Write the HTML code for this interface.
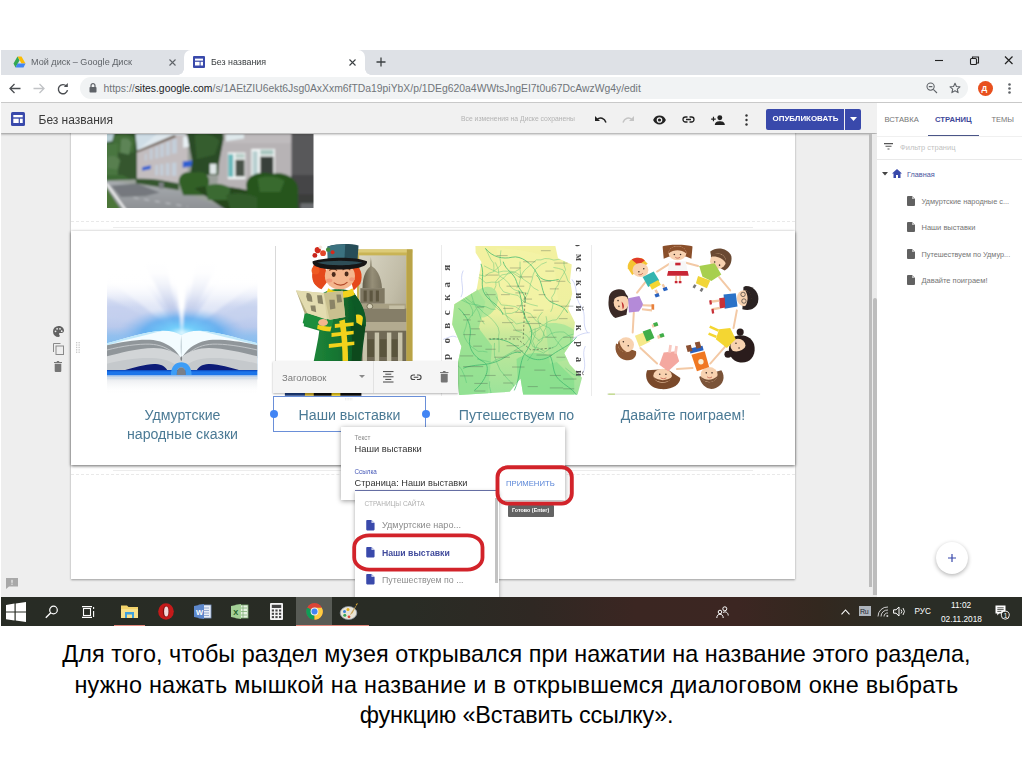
<!DOCTYPE html>
<html lang="ru">
<head>
<meta charset="utf-8">
<title>Без названия</title>
<style>
*{box-sizing:border-box;margin:0;padding:0}
html,body{width:1024px;height:767px;overflow:hidden;background:#fff}
body{position:relative;font-family:"Liberation Sans","DejaVu Sans",sans-serif;color:#333}
.a{position:absolute;white-space:nowrap}
svg{position:absolute;overflow:visible}
#shot{position:absolute;left:1px;top:50px;width:1021px;height:576px;overflow:hidden;background:#eee}
/* everything inside #shot is positioned with page coords via this wrapper */
#w{position:absolute;left:-1px;top:-50px;width:1024px;height:767px;filter:blur(.4px)}
.t{line-height:1}
#caption div{position:absolute;left:0;width:1033px;text-align:center;font-size:23.4px;line-height:28px;color:#000;white-space:nowrap}
</style>
</head>
<body>
<div id="shot"><div id="w">

<div class="a" style="left:71px;top:130px;width:724px;height:449px;background:#fff;box-shadow:0 1px 2px rgba(0,0,0,.35)"></div>
<svg style="left:107px;top:133.500px" width="206.500" height="74" viewBox="32 18 916 328" preserveAspectRatio="none">
<defs><filter id="bl1" x="-5%" y="-5%" width="110%" height="110%"><feGaussianBlur stdDeviation="3.600"/></filter><clipPath id="cp1"><rect x="32" y="18" width="916" height="328"/></clipPath>
<linearGradient id="rd" x1="0" y1="0" x2="0" y2="1"><stop offset="0" stop-color="#a9adb1"/><stop offset="1" stop-color="#8d9094"/></linearGradient></defs>
<g clip-path="url(#cp1)"><g filter="url(#bl1)">
<rect x="20" y="10" width="940" height="345" fill="#9aa09a"/>

<path d="M20 10h360v100H20z" fill="#dfe8ee"/>

<path d="M20 10h150l-5 40 10 60-10 110H20z" fill="#34572e"/>
<path d="M60 30c30-20 80-10 95 10l-5 60H60z" fill="#426d39"/>
<path d="M20 60h60v140H20z" fill="#487640"/>
<path d="M158 14h100l-92 78z" fill="#cfdde6"/><path d="M20 10h45l-10 40-35 5z" fill="#b9cfd6"/><path d="M95 40c20-8 40 0 45 20l-10 50-40-10z" fill="#5d8456"/><path d="M35 120c20-10 45-5 55 15l-10 40-45-5z" fill="#587f50"/>

<path d="M165 92L330 22h60v215L165 215z" fill="#c3bdbf"/>
<path d="M165 92L330 22l10 8L168 100z" fill="#6c5e52"/>
<g fill="#c3ced9"><path d="M320 45l22-7v65l-22 3zM293 56l18-6v62l-18 3zM268 66l16-5v58l-16 3zM246 76l14-5v54l-14 2zM222 86l12-4v48l-12 2zM200 108l8-3v30l-8 1zM320 145l20-1v60l-20-1zM293 148l16-1v56l-16-1zM268 152l14-1v52l-14-1zM246 155l12-1v48l-12-1z"/></g>
<path d="M188 165l38-8v16l-38 8zM368 140l50-6v26l-50 8z" fill="#2f5fd0"/>
<path d="M370 30l25-5v50l-25 4z" fill="#e8f0f4"/>

<path d="M385 10h160l18 100-25 30-10 60H400l10-60z" fill="#294b25"/>
<path d="M420 20c40-10 90 0 110 30l-20 60-80 20z" fill="#345d2d"/>

<path d="M555 10h300v260H520l10-130z" fill="#b7b3b5"/>
<path d="M555 18h295v40H560z" fill="#bfbbbd"/>
<path d="M560 18h80v20l-80 12z" fill="#dfe9ec"/>

<path d="M568 100h78v118h-78z" fill="#f3f6f6"/><path d="M570 108h22v100h-22z" fill="#66b7b9"/><path d="M602 132h40v74h-40z" fill="#4a5248"/><path d="M602 105h40v20h-40z" fill="#b9cfc9"/>
<path d="M672 84h105v125h-105z" fill="#f3f6f6"/><path d="M678 94h22v105h-22z" fill="#b7cfd0"/><path d="M712 118h58v82h-58z" fill="#39413a"/><path d="M712 88h58v22h-58z" fill="#a9c6c0"/>
<path d="M488 150h30v45h-30z" fill="#dfe7e7"/>

<path d="M850 10h110v345H850z" fill="#58585a"/>
<path d="M850 200h110v155H850z" fill="#454547"/>

<path d="M20 222l330 48 230 85H20z" fill="url(#rd)"/>
<path d="M50 247l116-10 100 40-62 16-110 4z" fill="#6d7177" opacity=".85"/>
<path d="M150 300l240 40" stroke="#c9ccd0" stroke-width="4" stroke-dasharray="22 26"/>
<path d="M30 238l85 117" stroke="#f2f2f2" stroke-width="9"/>
<path d="M20 240l75 115H20z" fill="#4c7538"/>
<path d="M20 200h80l40 20-120 5z" fill="#3d6a34"/>

<path d="M160 218c60-5 120 5 190 20v28l-190-30z" fill="#35562f"/>
<rect x="262" y="232" width="22" height="28" fill="#7b7f82"/>

<path d="M350 230c0-40 40-50 70-40 30-10 65 0 65 40l-10 60H370z" fill="#336028"/>
<path d="M420 260c60-20 130-15 250 10v85H560z" fill="#25471f"/>
<path d="M470 250c40-20 90-10 110 10l-10 50h-90z" fill="#3b6a32"/>
<path d="M650 250c-5-50 60-70 110-55 60-15 120 20 120 70v90H660z" fill="#27541f"/>
<path d="M700 215c40-15 90-10 120 10l-20 50H710z" fill="#386a2f"/>
<path d="M560 290c40-20 100-10 140 10v55H580z" fill="#315c29"/>
<path d="M880 285h80v70h-80z" fill="#3a3d3b"/>
<path d="M890 325h70v30h-70z" fill="#6a6d70"/>
</g></g></svg>


<div class="a" style="left:71px;top:220.500px;width:724px;height:0;border-top:1px dashed #e9e9e9"></div>
<div class="a" style="left:113px;top:227px;width:640px;height:1px;background:#ececec"></div>
<div class="a" style="left:71px;top:474px;width:724px;height:0;border-top:1px dashed #e9e9e9"></div>
<div class="a" style="left:113px;top:470px;width:640px;height:1px;background:#ececec"></div>

<div class="a" style="left:71px;top:231px;width:724px;height:233.500px;background:#fff;box-shadow:0 1px 3px rgba(0,0,0,.6)"></div>

<div class="a" style="left:274.500px;top:246px;width:1px;height:115px;background:#d9d9d9"></div>
<div class="a" style="left:440.500px;top:246px;width:1px;height:150px;background:#dcdcdc"></div>

<svg style="left:53px;top:325.500px" width="11" height="11" viewBox="0 0 11 11"><path d="M5.500 0a5.500 5.500 0 1 0 0 11c.9 0 1.300-.6 1.300-1.200 0-.9-.8-1 -.8-1.800 0-.6.500-1 1.100-1h1.500c1.400 0 2.400-1 2.400-2.400C11 1.900 8.500 0 5.500 0z" fill="#616161"/><circle cx="2.500" cy="5.300" r=".9" fill="#eee"/><circle cx="4.100" cy="2.800" r=".9" fill="#eee"/><circle cx="7" cy="2.800" r=".9" fill="#eee"/><circle cx="8.700" cy="5.200" r=".9" fill="#eee"/></svg>
<svg style="left:52.500px;top:342.500px" width="11" height="12" viewBox="0 0 11 12"><path d="M7.500.5h-7v8.500" stroke="#8a8a8a" stroke-width="1" fill="none"/><rect x="3" y="3" width="7.500" height="8.500" stroke="#8a8a8a" stroke-width="1" fill="none"/></svg>
<svg style="left:54px;top:361px" width="8" height="11" viewBox="0 0 8 11"><path d="M.7 2.700h6.600v7.300a1 1 0 0 1-1 1h-4.600a1 1 0 0 1-1-1zM0 .9h2.500l.6-.9h1.800l.6.900H8v1.100H0z" fill="#757575"/></svg>
<svg style="left:76px;top:341.500px" width="4" height="11" viewBox="0 0 4 11"><g fill="#c8c8c8"><rect x="0" y="0" width="1.300" height="1.300"/><rect x="2.500" y="0" width="1.300" height="1.300"/><rect x="0" y="2.400" width="1.300" height="1.300"/><rect x="2.500" y="2.400" width="1.300" height="1.300"/><rect x="0" y="4.800" width="1.300" height="1.300"/><rect x="2.500" y="4.800" width="1.300" height="1.300"/><rect x="0" y="7.200" width="1.300" height="1.300"/><rect x="2.500" y="7.200" width="1.300" height="1.300"/><rect x="0" y="9.600" width="1.300" height="1.300"/><rect x="2.500" y="9.600" width="1.300" height="1.300"/></g></svg>
<svg style="left:107px;top:262px" width="150.500" height="133" viewBox="62 60 768 680" preserveAspectRatio="none">
<defs>
<filter id="bl2" x="-10%" y="-10%" width="120%" height="120%"><feGaussianBlur stdDeviation="9"/></filter>
<filter id="bl2b" x="-10%" y="-10%" width="120%" height="120%"><feGaussianBlur stdDeviation="2.500"/></filter>
<clipPath id="cp2"><rect x="62" y="60" width="768" height="680"/></clipPath>
<linearGradient id="bg2" x1="0" y1="0" x2="0" y2="1"><stop offset="0" stop-color="#fff"/><stop offset=".12" stop-color="#fdfdff"/><stop offset=".3" stop-color="#d3dbf2"/><stop offset=".52" stop-color="#b9c9ec"/><stop offset=".6" stop-color="#94c0ee"/><stop offset=".7" stop-color="#7fbdf0"/><stop offset="1" stop-color="#7fbdf0"/></linearGradient>
<radialGradient id="glow2" cx="445" cy="425" r="330" gradientUnits="userSpaceOnUse" gradientTransform="translate(0 255) scale(1 .4)"><stop offset="0" stop-color="#e8fbff"/><stop offset=".22" stop-color="#72d0fb"/><stop offset=".6" stop-color="#56aaf0" stop-opacity=".8"/><stop offset="1" stop-color="#8fb8ee" stop-opacity="0"/></radialGradient>
<linearGradient id="pgL" x1="0" y1="0" x2="0" y2="1"><stop offset="0" stop-color="#dff3fb"/><stop offset=".22" stop-color="#c4e4f2"/><stop offset=".3" stop-color="#8d9599"/><stop offset=".55" stop-color="#a5abae"/><stop offset=".62" stop-color="#d9dbdc"/><stop offset="1" stop-color="#c5c8ca"/></linearGradient>
<linearGradient id="top2" x1="0" y1="0" x2="0" y2="1"><stop offset="0" stop-color="#fff"/><stop offset=".25" stop-color="#fff" stop-opacity=".95"/><stop offset="1" stop-color="#fff" stop-opacity="0"/></linearGradient>
<linearGradient id="fade2" x1="0" y1="0" x2="0" y2="1"><stop offset="0" stop-color="#d8dce2" stop-opacity=".9"/><stop offset=".35" stop-color="#eef0f3" stop-opacity=".8"/><stop offset="1" stop-color="#fff" stop-opacity="0"/></linearGradient>
</defs>
<g clip-path="url(#cp2)">
<rect x="62" y="100" width="768" height="560" fill="url(#bg2)"/>
<g filter="url(#bl2)">

<path d="M445 440L60 140V60h120z" fill="#fff" opacity=".4"/>
<path d="M445 440L250 60h110z" fill="#b9c4e6" opacity=".55"/>
<path d="M445 440L400 60h80z" fill="#fff" opacity=".95"/>
<path d="M445 440L520 60h110z" fill="#c3cdea" opacity=".5"/>
<path d="M445 440L700 60h140v90z" fill="#fff" opacity=".4"/>
<path d="M445 440L62 330v-90z" fill="#c3cfee" opacity=".7"/>
<path d="M445 440L830 330v-90z" fill="#c6d1ee" opacity=".7"/>
<rect x="62" y="280" width="768" height="250" fill="url(#glow2)"/>
<path d="M445 450L420 100h40z" fill="#fff"/>
</g>
<rect x="62" y="60" width="768" height="230" fill="url(#top2)"/>
<g filter="url(#bl2b)">

<path d="M62 476C150 450 260 415 350 411c40 0 70 8 91 24 21-16 51-24 91-24 90 4 200 39 298 65v60l-389 30-389-30z" fill="#f3fcff"/>
<path d="M62 476C150 450 260 415 350 411c-50 10-90 22-130 32-60 14-105 28-158 42z" fill="#bfe8fa"/>
<path d="M830 476C742 450 622 415 532 411c50 10 90 22 130 32 60 14 115 28 168 42z" fill="#bfe8fa"/>
<path d="M441 435c-5 40-5 80 0 112 5-32 5-72 0-112z" fill="#c9d6dc"/>

<path d="M62 486C130 470 210 456 280 458c50 2 95 22 125 50 15 14 26 30 36 50-40-34-90-48-140-48-90 2-170 26-239 42z" fill="#90969a"/>
<path d="M830 486C762 470 672 456 602 458c-50 2-95 22-125 50-15 14-26 30-36 50 40-34 90-48 140-48 90 2 180 26 249 42z" fill="#90969a"/>
<path d="M62 510C140 490 220 478 280 480c50 2 90 18 125 48" stroke="#c2c6c9" stroke-width="5" fill="none"/>
<path d="M830 510C742 490 662 478 602 480c-50 2-90 18-125 48" stroke="#c2c6c9" stroke-width="5" fill="none"/>

<path d="M62 542c69-16 149-40 239-42 50 0 100 14 140 48 40-34 90-48 140-48 90 2 180 26 249 42v72H62z" fill="#d2d5d7"/>
<path d="M62 580c90-22 200-40 290-22 40 10 70 30 89 50 19-20 49-40 89-50 90-18 210 0 300 22v34H62z" fill="#c5c9cc"/>
<path d="M441 540c-6 8-6 18 0 28 6-10 6-20 0-28z" fill="#7d8286"/>

<path d="M150 613c50-12 110-34 160-32 35 2 50 15 60 32z" fill="#0a1c78"/>
<path d="M740 613c-50-12-110-34-160-32-35 2-50 15-60 32z" fill="#0a1c78"/>

<path d="M62 612h768v26H62z" fill="#1b74ea"/>
<path d="M62 612h768v7H62z" fill="#0d4fc4"/>
<path d="M388 638c0-48 26-66 53-66s53 18 53 66h-30c0-26-8-38-23-38s-23 12-23 38z" fill="#3d9df6"/>
<path d="M418 638c0-26 8-38 23-38s23 12 23 38z" fill="#7a8088"/>

<rect x="62" y="640" width="768" height="95" fill="url(#fade2)"/>
<path d="M62 638h768v7H62z" fill="#8fb8ee" opacity=".8"/>
</g>
</g></svg>

<svg style="left:265px;top:235px" width="170" height="170" viewBox="0 0 767 767">
<defs>
<filter id="bl3" x="-5%" y="-5%" width="110%" height="110%"><feGaussianBlur stdDeviation="2.200"/></filter>
<clipPath id="cp3"><rect x="80" y="40" width="600" height="685"/></clipPath>
<linearGradient id="fr3" x1="0" y1="0" x2="1" y2="1"><stop offset="0" stop-color="#d9d6c5"/><stop offset=".5" stop-color="#c2bda8"/><stop offset="1" stop-color="#9c957e"/></linearGradient>
<linearGradient id="tw3" x1="0" y1="0" x2="1" y2="0"><stop offset="0" stop-color="#625c48"/><stop offset=".5" stop-color="#968f78"/><stop offset="1" stop-color="#7b7460"/></linearGradient>
<linearGradient id="ct3" x1="0" y1="0" x2="1" y2="0"><stop offset="0" stop-color="#1f8c3d"/><stop offset=".55" stop-color="#167431"/><stop offset="1" stop-color="#0a471e"/></linearGradient>
</defs>
<g clip-path="url(#cp3)"><g filter="url(#bl3)">

<rect x="415" y="65" width="250" height="640" fill="#c9b455"/>
<rect x="415" y="65" width="250" height="14" fill="#dccb78"/>
<rect x="640" y="65" width="25" height="640" fill="#b9a347"/>
<rect x="425" y="92" width="212" height="590" fill="url(#fr3)"/>

<path d="M478 98l4 60h-8z" fill="#7b745c"/>
<path d="M440 240c0-60 20-90 40-100 22 12 45 45 48 100z" fill="url(#tw3)"/>
<path d="M430 240h110v70H430z" fill="#7f7863"/>
<path d="M445 250h14v50h-14zM472 250h14v50h-14zM500 250h14v50h-14z" fill="#5d573f"/>
<path d="M420 310h215v22H420z" fill="#a8a084"/>
<circle cx="473" cy="322" r="13" fill="#d6d1ba" stroke="#6b654c" stroke-width="4"/>
<path d="M425 332h212v60H425z" fill="#857e68"/>
<path d="M560 318h70v16h-70z" fill="#c5bfa5"/>
<path d="M425 392h212v40H425z" fill="#b3ab90"/>
<path d="M425 432h212v250H425z" fill="#6f6955"/>
<path d="M440 440h20v242h-20zM495 440h20v242h-20zM550 440h20v242h-20zM600 440h20v242h-20z" fill="#c9c4ac"/>
<path d="M462 470h30v80h-30zM518 470h30v80h-30zM572 470h26v80h-26z" fill="#5a543d"/>

<path d="M262 262c40-25 100-25 140 0 30 40 55 90 52 140-5 60-15 110-20 180l5 100H205c5-90 30-170 40-250l-70-20 5-60 80-30z" fill="url(#ct3)"/>
<path d="M180 352c30 15 90 25 130 20l-10 50c-50 5-100-5-130-25z" fill="#1d8e3e"/>
<path d="M400 262c35 40 60 90 55 150l-30 10c-5-60-20-110-45-150z" fill="#0e5a27"/>
<path d="M385 400c10 60 10 120 5 180l40-5c0-60 10-120 20-170z" fill="#0a4a1f"/>

<path d="M360 380c10 60 15 130 15 200l-25-2c0-70-5-130-15-190z" fill="#f2d21c"/>
<path d="M315 402l85-8v16l-85 10zM300 442l100-10v16l-100 12zM288 492l115-12v16l-115 14z" fill="#f2d21c"/>
<path d="M410 360c15-5 30 0 32 15l-5 35-25-15z" fill="#f2d21c"/>
<path d="M238 405c20 5 45 10 62 8l-5 22c-20 0-45-5-60-12z" fill="#f2d21c"/>

<path d="M285 240c30 20 80 20 110 0l10 30c-40 20-90 20-130 0z" fill="#f2d21c"/>

<path d="M140 250l125 12 85-10 12 118-70 12-105-30z" fill="#d9d2a2"/>
<path d="M140 250l125 12 15 120-90-30z" fill="#e3dcb0"/>
<path d="M265 262l85-10 12 118-70 12z" fill="#c9c08f"/>
<path d="M188 262c12-3 22 5 24 20l2 20-22-4-6-20zM235 272h22l6 40-24-4zM205 318h22l4 30-22-6zM290 292h24l4 40-24 4zM322 268h20l6 34-22 4z" fill="#8a8466"/>
<path d="M140 250l50 102-10 4z" fill="#b5ad80"/>

<path d="M215 165c-5-30 20-55 50-50l20 90-30 40c-30-10-50-45-40-80z" fill="#e5481b"/>
<path d="M400 130c30 10 45 50 30 90l-30 30-20-70z" fill="#e5481b"/>
<circle cx="240" cy="205" r="22" fill="#e5481b"/><circle cx="228" cy="160" r="18" fill="#ef5a24"/>

<ellipse cx="338" cy="185" rx="68" ry="60" fill="#f4b68e"/>
<path d="M290 160c10-8 25-8 35 0M350 158c10-8 25-8 35 0" stroke="#7a3b1c" stroke-width="5" fill="none"/>
<ellipse cx="310" cy="178" rx="9" ry="11" fill="#4a2a1a"/><ellipse cx="368" cy="176" rx="9" ry="11" fill="#4a2a1a"/>
<path d="M310 215c20 15 45 15 62-2" stroke="#b24a2a" stroke-width="5" fill="none"/>
<ellipse cx="290" cy="205" rx="14" ry="9" fill="#f09a7a"/><ellipse cx="392" cy="200" rx="12" ry="9" fill="#f09a7a"/>

<path d="M282 52c45-14 100-14 140-5l-6 88H284z" fill="#274d58"/>
<path d="M282 52c25-7 55-10 80-10l-5 93h-73z" fill="#3b7280"/>
<path d="M288 112h130v22H288z" fill="#1d3a44"/>
<path d="M215 118c60-20 190-22 245 0 5 20-30 35-120 38-90 0-130-15-125-38z" fill="#161616"/>
<path d="M235 125c60-12 150-12 205 0-50 14-150 16-205 0z" fill="#2d4d57"/>

<circle cx="238" cy="68" r="14" fill="#d22c1c"/><circle cx="262" cy="82" r="13" fill="#e2472c"/><circle cx="225" cy="92" r="11" fill="#c8241a"/><circle cx="285" cy="66" r="10" fill="#3d8a3a"/><circle cx="250" cy="55" r="8" fill="#f4e8e0"/><circle cx="305" cy="78" r="9" fill="#d22c1c"/>

<ellipse cx="262" cy="395" rx="22" ry="16" fill="#f4b68e"/>

<path d="M215 650h220v50H215z" fill="#102a6a"/>
<path d="M90 700h230v28H90zM335 700h100v28H335z" fill="#111"/><path d="M90 700h90v28H90z" fill="#1a3a7a"/><path d="M180 700h40v28h-40z" fill="#c9a82a"/>
<path d="M300 690h40v38h-40z" fill="#e2c21c"/>
</g></g></svg>

<svg style="left:441px;top:245px" width="151" height="151" viewBox="50 45 680 680">
<defs>
<filter id="bl4" x="-5%" y="-5%" width="110%" height="110%"><feGaussianBlur stdDeviation="2.500"/></filter>
<clipPath id="cp4"><rect x="50" y="45" width="680" height="680"/></clipPath>
<clipPath id="reg4"><path id="regp" d="M205 50h360l12 55 62 28-8 70 10 60-18 70 30 60-8 80-40 60 25 50 55 60-20 75H420l-12-72-48 60-228 14-12-118 22-100-42-100 10-90 100-62 22-128-26-42z"/></clipPath>
<linearGradient id="mg4" x1="0" y1="0" x2="0" y2="1"><stop offset="0" stop-color="#f3f1a0"/><stop offset=".45" stop-color="#eef0a0"/><stop offset=".62" stop-color="#c4e89a"/><stop offset="1" stop-color="#9be39a"/></linearGradient>
</defs>
<g clip-path="url(#cp4)">
<rect x="50" y="45" width="680" height="680" fill="#fff"/>
<g filter="url(#bl4)">
<path d="M205 50h360l12 55 62 28-8 70 10 60-18 70 30 60-8 80-40 60 25 50 55 60-20 75H420l-12-72-48 60-228 14-12-118 22-100-42-100 10-90 100-62 22-128-26-42z" fill="url(#mg4)"/>
<g clip-path="url(#reg4)">
<path d="M100 300l110-60 40 60-30 120 60 80-20 230H100z" fill="#8fe090" opacity=".75"/>
<path d="M215 250c40-30 80-20 90 20s-20 90-60 100-60-60-30-120z" fill="#a6e596" opacity=".8"/>
<path d="M390 560c40-30 120-40 160-10l100 100v80H400z" fill="#86df8c" opacity=".8"/>
<path d="M520 400c40-10 100 0 130 30l-20 130-90 20z" fill="#a5e698" opacity=".8"/>
<path d="M300 60c60 0 200 10 260 60l20 200-120 40-140-60z" fill="#f4f3a6" opacity=".7"/>
</g>

<g stroke="#3fb86f" stroke-width="4" fill="none" opacity=".85">
<path d="M250 60c30 40 80 50 120 40s90 30 110 70 60 40 100 30"/>
<path d="M130 330c40 40 60 80 50 130s20 90 60 110 10 90-40 130"/>
<path d="M270 470c60-10 110 20 150 60s90 40 130 10 80-40 110-80"/>
<path d="M400 250c20 50 10 100 40 140s20 100-10 140-20 110-50 170"/>
<path d="M540 540c20 40 10 80 40 110s60 40 80 70"/>
<path d="M230 130c20 50-10 100 20 140s60 40 80 90"/>
<path d="M480 180c30 30 20 80 50 110s70 20 90 60"/>
<path d="M150 600c50-20 100-10 150-30s70-50 110-40"/>
<path d="M330 120c10 40 50 50 60 90s40 50 40 90"/>
</g>
<g clip-path="url(#reg4)" stroke="#45bd74" stroke-width="2.600" fill="none" opacity=".7"><path d="M288 165Q289 147 287 127Q275 114 267 95Q259 76 250 61"/><path d="M448 437Q468 422 487 420Q511 407 532 391Q551 381 570 382Q589 359 604 332Q625 310 634 288Q656 276 681 278"/><path d="M526 122Q504 125 475 155Q462 180 460 202Q452 218 450 237Q442 264 423 297Q409 314 393 343Q367 358 342 353"/><path d="M485 478Q508 459 529 457Q542 441 565 438Q584 435 604 437Q620 449 634 460Q630 489 649 522Q649 546 667 566"/><path d="M198 181Q229 192 252 216Q279 210 306 213Q337 195 354 169Q380 173 403 154"/><path d="M474 422Q480 450 462 478Q471 493 474 517Q494 522 512 531Q542 507 569 500Q581 478 597 462Q630 451 664 441"/><path d="M165 134Q149 163 134 185Q110 180 87 195Q66 199 43 184Q36 166 9 143Q-16 130 -41 123"/><path d="M439 567Q463 537 475 514Q479 491 503 476Q512 459 514 433Q534 405 523 366"/><path d="M310 209Q308 233 332 256Q365 268 397 272Q411 289 423 301Q455 315 486 320"/><path d="M165 666Q161 640 141 602Q130 587 107 581Q77 579 43 587Q23 607 -7 606Q-33 583 -58 579Q-84 577 -120 556"/><path d="M251 255Q270 279 274 298Q290 322 309 335Q336 357 362 377Q376 384 389 401Q416 394 451 389"/><path d="M497 421Q480 435 465 442Q447 467 430 493Q402 507 372 526Q347 540 326 552Q300 558 279 574Q245 565 213 559"/><path d="M610 599Q626 612 647 628Q669 637 692 635Q712 653 726 681"/><path d="M191 365Q199 339 181 314Q163 300 144 279Q123 285 99 270"/><path d="M408 347Q427 342 453 354Q459 364 480 388Q513 410 539 419Q549 451 570 476Q587 496 604 517"/><path d="M290 246Q301 228 297 209Q313 191 322 180Q346 177 372 170Q393 183 409 194"/><path d="M244 139Q272 154 305 168Q330 160 356 163Q390 162 418 194"/><path d="M383 686Q376 672 358 657Q335 632 316 608Q299 573 291 543Q289 515 291 486"/><path d="M148 152Q165 155 183 163Q215 181 249 186Q264 168 285 166Q308 148 320 135Q311 104 320 69"/><path d="M294 123Q314 154 311 183Q335 195 355 217Q359 235 379 246Q407 258 443 264"/><path d="M517 524Q489 505 464 503Q456 475 437 453Q412 435 388 431Q372 400 352 379Q337 357 336 322"/><path d="M189 297Q207 320 230 337Q239 351 256 360Q273 369 295 397Q311 415 312 438Q307 456 311 480Q312 504 311 528"/><path d="M519 459Q511 436 497 418Q491 399 486 379Q491 363 507 347"/><path d="M489 250Q465 243 446 216Q424 203 410 190Q404 157 406 120"/><path d="M604 117Q601 137 611 156Q604 174 582 208Q583 224 566 240Q565 262 548 282Q562 313 544 346"/><path d="M556 146Q579 149 600 157Q615 182 622 208Q639 224 649 233"/><path d="M269 659Q265 682 274 705Q274 722 283 740Q279 767 260 790Q236 806 214 807Q195 798 165 792"/><path d="M209 331Q196 356 168 387Q164 414 153 440Q152 460 167 480Q179 501 217 524Q237 522 259 527"/><path d="M167 221Q149 245 126 265Q111 288 91 299Q91 331 65 363Q54 393 27 416"/><path d="M249 322Q217 328 186 303Q160 281 134 262Q110 260 87 274Q53 273 23 247Q-3 241 -29 258"/><path d="M495 478Q467 462 457 428Q452 410 439 397Q430 370 423 346Q411 341 384 322Q355 317 322 315Q307 293 298 277"/><path d="M246 402Q228 384 220 348Q205 325 195 295Q181 267 185 228"/><path d="M296 335Q277 339 252 323Q234 325 211 313Q193 317 168 305Q148 294 116 282"/><path d="M593 106Q576 111 558 113Q538 105 518 106Q501 115 479 112Q457 132 436 150Q413 167 406 203Q406 222 391 239"/></g>
<g stroke="#2a2a2a" stroke-width="3" fill="none" stroke-dasharray="10 8" opacity=".7"><path d="M265 468h130l60 50 100-10M430 260l-10 210"/></g>

<g stroke="#9aa8e8" stroke-width="2.500" fill="none" opacity=".8"><path d="M150 160c-20 40 10 80-10 120M640 200c30 40 10 80 40 120s0 80 30 120M60 470c30-10 40-20 60-10M640 470c30-20 50-30 80-30M700 500c-20 40 10 80-10 120"/></g>

<g fill="#4a5a4a" opacity=".32">
<rect x="300" y="90" width="50" height="5"/><rect x="420" y="118" width="56" height="5"/><rect x="500" y="68" width="44" height="5"/><rect x="560" y="124" width="60" height="5"/><rect x="250" y="178" width="58" height="5"/><rect x="360" y="146" width="50" height="5"/><rect x="400" y="186" width="60" height="5"/><rect x="520" y="160" width="40" height="5"/><rect x="500" y="206" width="46" height="5"/><rect x="570" y="206" width="40" height="5"/><rect x="345" y="228" width="80" height="5"/><rect x="250" y="266" width="46" height="5"/><rect x="320" y="266" width="40" height="5"/><rect x="385" y="258" width="36" height="5"/><rect x="540" y="240" width="40" height="5"/><rect x="490" y="266" width="30" height="5"/><rect x="420" y="286" width="40" height="5"/><rect x="540" y="296" width="40" height="5"/><rect x="590" y="318" width="56" height="5"/><rect x="210" y="322" width="34" height="5"/><rect x="330" y="328" width="46" height="5"/><rect x="390" y="316" width="36" height="5"/><rect x="466" y="336" width="46" height="5"/><rect x="150" y="356" width="30" height="5"/><rect x="385" y="346" width="34" height="5"/><rect x="440" y="368" width="40" height="5"/><rect x="580" y="374" width="40" height="5"/><rect x="150" y="380" width="34" height="5"/><rect x="215" y="386" width="30" height="5"/><rect x="325" y="392" width="50" height="5"/><rect x="430" y="396" width="70" height="5"/><rect x="185" y="420" width="40" height="5"/><rect x="375" y="426" width="40" height="5"/><rect x="150" y="446" width="56" height="5"/><rect x="360" y="456" width="50" height="5"/><rect x="520" y="458" width="50" height="5"/><rect x="600" y="458" width="50" height="5"/><rect x="195" y="498" width="40" height="5"/><rect x="345" y="496" width="56" height="5"/><rect x="250" y="512" width="46" height="5"/><rect x="380" y="520" width="40" height="5"/><rect x="480" y="538" width="70" height="5"/><rect x="135" y="542" width="60" height="5"/><rect x="290" y="548" width="70" height="5"/><rect x="570" y="548" width="40" height="5"/><rect x="150" y="590" width="90" height="5"/><rect x="370" y="592" width="56" height="5"/><rect x="470" y="606" width="50" height="5"/><rect x="135" y="632" width="60" height="5"/><rect x="250" y="630" width="46" height="5"/><rect x="330" y="628" width="40" height="5"/><rect x="540" y="630" width="50" height="5"/><rect x="600" y="646" width="60" height="5"/><rect x="200" y="666" width="60" height="5"/><rect x="330" y="664" width="46" height="5"/><rect x="440" y="680" width="46" height="5"/><rect x="540" y="686" width="60" height="5"/><rect x="200" y="700" width="50" height="5"/><rect x="600" y="690" width="50" height="5"/>
</g>
</g>

<path d="M52 45v680M728 45v680" stroke="#cfcfcf" stroke-width="2"/>
<g font-family="Liberation Serif,serif" font-weight="bold" fill="#4a4a4a" text-anchor="middle">
<g font-size="50"><text transform="translate(91 147.7) rotate(-90)">я</text><text transform="translate(91 223.8) rotate(-90)">а</text><text transform="translate(91 281.4) rotate(-90)">к</text><text transform="translate(91 349.9) rotate(-90)">с</text><text transform="translate(91 408.9) rotate(-90)">в</text><text transform="translate(91 476.4) rotate(-90)">о</text><text transform="translate(91 548.9) rotate(-90)">р</text></g>
<g font-size="46"><text transform="translate(657 100.8) rotate(90)">м</text><text transform="translate(657 154) rotate(90)">с</text><text transform="translate(657 215.7) rotate(90)">к</text><text transform="translate(657 273.3) rotate(90)">и</text><text transform="translate(657 331) rotate(90)">й</text><text transform="translate(657 417.4) rotate(90)">к</text><text transform="translate(657 491.3) rotate(90)">р</text><text transform="translate(657 561) rotate(90)">а</text><text transform="translate(657 622.8) rotate(90)">й</text><text transform="translate(652 40) rotate(90)">р</text></g>
</g>
</g></svg>

<svg style="left:595px;top:235px" width="170" height="170" viewBox="0 0 767 767">
<defs><filter id="bl5" x="-5%" y="-5%" width="110%" height="110%"><feGaussianBlur stdDeviation="2.200"/></filter></defs>
<g filter="url(#bl5)">

<g stroke="#f3c9a5" stroke-width="9" fill="none" stroke-linecap="round">
<path d="M335 130l-55 35M410 125l55 15M560 190l50 60M640 340l-15 80M590 500l-70 80M440 600l-70 5M280 580l-75-70M170 440l5-90M190 260l55-70"/>
</g>

<path d="M305 52c20-10 110-10 135 0l-5 55-25-10h-75l-25 10z" fill="#8a4f2c"/>
<ellipse cx="372" cy="82" rx="40" ry="32" fill="#f8d2b0"/>
<path d="M335 118h75l8 50h-90z" fill="#f7f7f7"/><path d="M330 162h88l5 22h-98z" fill="#c82835"/><path d="M362 125h24v12h-24z" fill="#c82835"/>
<path d="M362 185h8v25h-8zM380 185h8v25h-8z" fill="#f3c9a5"/><path d="M360 208h12v10h-12zM378 208h12v10h-12z" fill="#c82835"/>

<path d="M520 75c30-25 80-15 95 20 5 30-10 55-30 65l-55-30z" fill="#6b4a32"/>
<ellipse cx="555" cy="118" rx="36" ry="34" fill="#f8d2b0"/>
<path d="M470 140l70-12 30 50-45 30-40-20z" fill="#a7cf4f"/><path d="M465 185l55 20-15 35-50-22z" fill="#f1d538"/>
<path d="M448 222l10 5-8 14-10-5zM480 238l10 5-8 14-10-5z" fill="#777"/>

<path d="M680 230c40 0 65 35 55 75-10 30-40 40-70 30l5-100z" fill="#2b2220"/>
<ellipse cx="672" cy="285" rx="32" ry="36" fill="#f8d2b0"/>
<circle cx="668" cy="268" r="10" fill="none" stroke="#333" stroke-width="3"/><circle cx="672" cy="298" r="10" fill="none" stroke="#333" stroke-width="3"/>
<path d="M580 268l55-5 8 60-58 10z" fill="#2a72c8"/><path d="M560 285l25-3 3 45-25 5z" fill="#c83038"/>
<path d="M520 296l40-5 2 10-40 6zM525 330l38-6 2 10-38 8z" fill="#f3c9a5"/><path d="M515 295l10-2 3 20-10 2zM525 335l10-2 3 20-10 2z" fill="#c83038"/>

<path d="M625 460c40-20 90 0 95 45s-25 75-65 70-55-40-50-70z" fill="#2a1f1c"/><circle cx="655" cy="438" r="16" fill="#2a1f1c"/><circle cx="600" cy="538" r="16" fill="#2a1f1c"/>
<ellipse cx="645" cy="500" rx="34" ry="32" fill="#f8d2b0"/>
<path d="M560 425l50-5 25 50-40 40-50-40z" fill="#f4d630"/>
<path d="M520 408l40 18-5 10-40-18zM515 440l35 15-5 10-35-15z" fill="#f4d630"/>

<path d="M470 640c10 40 40 65 75 50s45-50 25-80z" fill="#7a5238"/>
<ellipse cx="515" cy="630" rx="38" ry="34" fill="#f8d2b0"/>
<path d="M435 540l60-15 20 70-55 20z" fill="#f07820"/><path d="M430 535l60-15-5-20-58 12z" fill="#2a62c0"/>
<path d="M410 500l22-5 8 28-22 5zM450 485l22-5 8 28-22 5z" fill="#8a5030"/>
<circle cx="478" cy="572" r="12" fill="#f8f0d8"/>

<path d="M235 610c-15 40 10 80 60 85s90-20 90-50l-60-40z" fill="#7a4a2c"/>
<ellipse cx="305" cy="635" rx="42" ry="32" fill="#f8d2b0"/>
<path d="M310 530l55-5 15 45-50 45-40-30z" fill="#f4a8a0"/>
<path d="M335 495l12 2-5 35-12-2zM362 500l12 2-5 35-12-2z" fill="#f8c8c0"/>

<path d="M95 490c-10 35 10 70 45 75s50-20 45-40z" fill="#8a5530"/>
<ellipse cx="140" cy="495" rx="36" ry="34" fill="#f8d2b0"/>
<path d="M180 455l50-20 20 45-50 25z" fill="#f6e88a"/><path d="M215 435l35-12 18 42-35 15z" fill="#3fae49"/>
<path d="M255 405l25-8 5 12-25 10zM280 455l28-8 4 12-28 10z" fill="#f3c9a5"/><path d="M262 398l18-6 6 16-18 6zM290 448l18-6 6 16-18 6z" fill="#3fae49"/>

<path d="M62 290c0-40 40-55 70-40l20 40-10 70-50 15c-25-15-35-50-30-85z" fill="#3a2a26"/>
<ellipse cx="118" cy="305" rx="34" ry="38" fill="#f8d2b0"/><path d="M120 300c10 10 15 25 5 35z" fill="#c03030"/>
<path d="M150 285l50-10 18 40-20 30-45 5z" fill="#b48ad8"/>
<path d="M215 312l45 2v10l-45-2zM212 330l45 5v10l-45-5z" fill="#f3c9a5"/><path d="M255 312l12 1v24l-12-1z" fill="#e8803a"/>

<path d="M148 150c-5-35 30-55 65-45l25 25-70 50z" fill="#f4c530"/><path d="M165 110c20-12 45-10 60 5l-30 20z" fill="#e03a2a"/>
<ellipse cx="205" cy="158" rx="36" ry="32" fill="#f8d2b0"/>
<path d="M215 190l50-25 25 40-50 30z" fill="#35b5b0"/><path d="M245 225l40-22 12 22-40 22z" fill="#f4d630"/>
<path d="M268 250l10-5 12 22-10 5zM300 225l10-5 12 22-10 5z" fill="#f3c9a5"/><path d="M268 268l18-6 6 14-18 6zM305 240l18-6 6 14-18 6z" fill="#2a62c0"/>

<path d="M332 84c0-44 80-44 80 0-25-20-55-20-80 0z" fill="#8a4f2c"/>
<path d="M522 98c20-28 74-16 70 32-15-27-45-37-70-32z" fill="#6b4a32"/>
<path d="M678 250c38 5 38 66 0 72 14-25 14-48 0-72z" fill="#2b2220"/>
<path d="M618 522c15 26 62 16 64-22-15 24-40 30-64 22z" fill="#2a1f1c"/>
<path d="M478 640c10 32 68 32 76-5-24 22-52 24-76 5z" fill="#7a5238"/>
<path d="M263 640c5 32 82 32 86 0-26 20-60 20-86 0z" fill="#7a4a2c"/>
<path d="M110 474c-18 26 4 60 38 56-24-10-38-32-38-56z" fill="#8a5530"/>
<path d="M88 288c5-34 54-34 62-6-22-10-46-8-62 6z" fill="#3a2a26"/>
<g fill="#3a2a22"><circle cx="358" cy="88" r="3.500"/><circle cx="386" cy="88" r="3.500"/><circle cx="540" cy="122" r="3.500"/><circle cx="562" cy="136" r="3.500"/><circle cx="198" cy="166" r="3.500"/><circle cx="220" cy="152" r="3.500"/><circle cx="104" cy="296" r="3.500"/><circle cx="108" cy="322" r="3.500"/><circle cx="128" cy="482" r="3.500"/><circle cx="150" cy="500" r="3.500"/><circle cx="292" cy="628" r="3.500"/><circle cx="320" cy="628" r="3.500"/><circle cx="502" cy="622" r="3.500"/><circle cx="528" cy="622" r="3.500"/><circle cx="636" cy="488" r="3.500"/><circle cx="650" cy="510" r="3.500"/></g>
<path d="M362 100c6 6 16 6 22 0M196 178c8 4 16 0 20-6M296 644c8 6 18 6 26 0M506 640c8 6 16 6 22 0" stroke="#b5483a" stroke-width="3" fill="none"/>

<path d="M55 718h690" stroke="#cfcfcf" stroke-width="3"/><path d="M60 718h30" stroke="#a7cf4f" stroke-width="4"/>
</g></svg>


<div class="a t" style="left:107px;top:407.500px;width:151px;text-align:center;font-size:14.150px;color:#4b7a95">Удмуртские</div>
<div class="a t" style="left:107px;top:427px;width:151px;text-align:center;font-size:14.150px;color:#4b7a95">народные сказки</div>
<div class="a t" style="left:274px;top:407.500px;width:151px;text-align:center;font-size:14.150px;color:#4b7a95">Наши выставки</div>
<div class="a t" style="left:441px;top:407.500px;width:151px;text-align:center;font-size:14.150px;color:#4b7a95">Путешествуем по</div>
<div class="a t" style="left:607.500px;top:407.500px;width:151px;text-align:center;font-size:14.150px;color:#4b7a95">Давайте поиграем!</div>

<div class="a" style="left:273px;top:395.500px;width:153px;height:36.500px;border:1.200px solid #6a8fd8"></div>
<div class="a" style="left:269.500px;top:410px;width:8px;height:8px;border-radius:50%;background:#4285f4"></div>
<div class="a" style="left:421.500px;top:410px;width:8px;height:8px;border-radius:50%;background:#4285f4"></div>
<svg style="left:345px;top:398px" width="8" height="2" viewBox="0 0 8 2"><path d="M0 .5h8M0 1.800h8" stroke="#ddd" stroke-width=".6" stroke-dasharray="1 .6"/></svg>

<div class="a" style="left:273px;top:361px;width:184.500px;height:31.500px;background:#f5f5f5;box-shadow:0 .5px 2px rgba(0,0,0,.3)"></div>
<div class="a" style="left:373px;top:361px;width:1px;height:31.500px;background:#e2e2e2"></div>
<div class="a t" style="left:282px;top:372.500px;font-size:9.450px;color:#7a7a7a">Заголовок</div>
<svg style="left:359px;top:374.500px" width="6" height="3" viewBox="0 0 6 3"><path d="M0 0h6l-3 3z" fill="#8a8a8a"/></svg>
<svg style="left:382.500px;top:371px" width="10.500" height="11.500" viewBox="0 0 10.500 11.500"><path d="M0 .6h10.500M2.300 3.200h6M0 5.800h10.500M2.300 8.400h6M0 11h10.500" stroke="#444" stroke-width="1"/></svg>
<svg style="left:410px;top:374px" width="12" height="6.500" viewBox="0 0 13 7"><path d="M5.500 1h-2a2.500 2.500 0 0 0 0 5h2M7.500 1h2a2.500 2.500 0 0 1 0 5h-2M4 3.500h5" stroke="#444" stroke-width="1.200" fill="none"/></svg>
<svg style="left:439.500px;top:371px" width="8.500" height="11.500" viewBox="0 0 8 11"><path d="M.7 2.700h6.600v7.300a1 1 0 0 1-1 1h-4.600a1 1 0 0 1-1-1zM0 .9h2.500l.6-.9h1.800l.6.900H8v1.100H0z" fill="#757575"/></svg>

<div class="a" style="left:341px;top:427px;width:223.500px;height:73px;background:#fff;box-shadow:0 1px 5px rgba(0,0,0,.4)"></div>
<div class="a t" style="left:354.500px;top:434.500px;font-size:6.300px;color:#8a8a8a">Текст</div>
<div class="a t" style="left:354.500px;top:445px;font-size:9.350px;color:#333">Наши выставки</div>
<div class="a t" style="left:354.500px;top:468.500px;font-size:6.300px;color:#4659b8">Ссылка</div>
<div class="a t" style="left:354.500px;top:478.500px;font-size:9.200px;color:#333">Страница: Наши выставки</div>
<div class="a" style="left:354.500px;top:489.500px;width:142px;height:1px;background:#6f78b2"></div>
<div class="a t" style="left:506px;top:479.500px;font-size:7.720px;color:#5a86d8">ПРИМЕНИТЬ</div>

<div class="a" style="left:354.500px;top:491px;width:144.500px;height:110px;background:#fff;box-shadow:0 1px 4px rgba(0,0,0,.35)"></div>
<div class="a" style="left:495.300px;top:498px;width:2.400px;height:85px;background:#c2c2c2"></div>
<div class="a t" style="left:364.500px;top:500.500px;font-size:6.500px;color:#b0b0b0">СТРАНИЦЫ САЙТА</div>
<svg style="left:366.300px;top:520.300px" width="8.800" height="10.400" viewBox="0 0 8 10"><path d="M0 .8a.8.8 0 0 1 .8-.8h4.200l3 3v6.200a.8.800 0 0 1-.8.800h-6.400a.8.800 0 0 1-.8-.8z" fill="#3949ab"/><path d="M5 0v3h3z" fill="#c5cae9"/></svg>
<svg style="left:366.300px;top:547.300px" width="8.800" height="10.400" viewBox="0 0 8 10"><path d="M0 .8a.8.8 0 0 1 .8-.8h4.200l3 3v6.200a.8.800 0 0 1-.8.800h-6.400a.8.800 0 0 1-.8-.8z" fill="#3949ab"/><path d="M5 0v3h3z" fill="#c5cae9"/></svg>
<svg style="left:366.300px;top:574.300px" width="8.800" height="10.400" viewBox="0 0 8 10"><path d="M0 .8a.8.8 0 0 1 .8-.8h4.200l3 3v6.200a.8.800 0 0 1-.8.800h-6.400a.8.800 0 0 1-.8-.8z" fill="#3949ab"/><path d="M5 0v3h3z" fill="#c5cae9"/></svg>
<div class="a t" style="left:382px;top:521px;font-size:9.100px;color:#8c8c8c">Удмуртские наро...</div>
<div class="a t" style="left:382px;top:548.500px;font-size:8.700px;font-weight:bold;color:#414b9c">Наши выставки</div>
<div class="a t" style="left:382px;top:575.500px;font-size:8.800px;color:#8c8c8c">Путешествуем по ...</div>

<div class="a" style="left:507.500px;top:505px;width:46px;height:11.500px;background:#636363;border-radius:1px"></div>
<div class="a t" style="left:512px;top:508px;font-size:5.400px;font-weight:bold;color:#fff">Готово (Enter)</div>

<svg style="left:0;top:0" width="1024" height="767" viewBox="0 0 1024 767"><rect x="497.500" y="467.300" width="74.300" height="36.300" rx="10" ry="10" fill="none" stroke="#d2232a" stroke-width="3.900"/><rect x="354.200" y="535.300" width="128.300" height="34.300" rx="15" ry="12" fill="none" stroke="#d2232a" stroke-width="3.800"/></svg>

<svg style="left:6px;top:578px" width="12" height="11" viewBox="0 0 12 11"><path d="M0 0h12v8.500H3l-3 2.500z" fill="#a8a8a8"/><rect x="5.400" y="1.800" width="1.200" height="3" fill="#eee"/><rect x="5.400" y="5.600" width="1.200" height="1.200" fill="#eee"/></svg>

<div class="a" style="left:0;top:102px;width:877px;height:31px;background:#f1f1f1;box-shadow:0 1px 2.500px rgba(0,0,0,.4)"></div>
<svg style="left:11px;top:112px" width="14" height="14" viewBox="0 0 14 14"><rect width="14" height="14" rx="1.500" fill="#3949ab"/><rect x="2.300" y="3" width="9.400" height="2.300" fill="#fff"/><rect x="2.300" y="6.700" width="5.400" height="4.300" fill="#fff"/><rect x="8.900" y="6.700" width="2.800" height="4.300" fill="#fff"/></svg>
<div class="a t" style="left:38.500px;top:113.500px;font-size:12px;color:#3a3a3a">Без названия</div>
<div class="a t" style="left:461px;top:116px;font-size:6.800px;color:#b3b3b3">Все изменения на Диске сохранены</div>

<svg style="left:594px;top:115px" width="13" height="10" viewBox="0 0 13 10"><path d="M1 1v5h5z" fill="#222"/><path d="M3 4.500c3-2.600 7.500-1.500 9 3" stroke="#222" stroke-width="1.500" fill="none"/></svg>

<svg style="left:622px;top:115px" width="13" height="10" viewBox="0 0 13 10"><path d="M12 1v5h-5z" fill="#c4c4c4"/><path d="M10 4.500c-3-2.600-7.500-1.500-9 3" stroke="#c4c4c4" stroke-width="1.500" fill="none"/></svg>

<svg style="left:652.500px;top:114.500px" width="13" height="10" viewBox="0 0 14 11"><path d="M0 5.500c2.500-6.500 11.500-6.500 14 0-2.500 6.500-11.500 6.500-14 0z" fill="#222"/><circle cx="7" cy="5.500" r="3.100" fill="#f1f1f1"/><circle cx="7" cy="5.500" r="1.700" fill="#222"/></svg>

<svg style="left:682px;top:116px" width="13" height="7" viewBox="0 0 13 7"><path d="M5.500 1h-2a2.500 2.500 0 0 0 0 5h2M7.500 1h2a2.500 2.500 0 0 1 0 5h-2M4 3.500h5" stroke="#222" stroke-width="1.300" fill="none"/></svg>

<svg style="left:710.500px;top:114.500px" width="14" height="10" viewBox="0 0 15 11"><circle cx="9.500" cy="3" r="2.700" fill="#222"/><path d="M4 11c0-3.500 3-4.200 5.500-4.200s5.500.7 5.500 4.200z" fill="#222"/><path d="M2.500 2v5M0 4.500h5" stroke="#222" stroke-width="1.300"/></svg>
<svg style="left:745px;top:114px" width="3" height="12" viewBox="0 0 3 12"><circle cx="1.500" cy="1.500" r="1.200" fill="#333"/><circle cx="1.500" cy="6" r="1.200" fill="#333"/><circle cx="1.500" cy="10.500" r="1.200" fill="#333"/></svg>
<div class="a" style="left:765.500px;top:108.500px;width:78.500px;height:21px;background:#3949ab;border-radius:2px 0 0 2px"></div>
<div class="a t" style="left:772.500px;top:115px;font-size:7.950px;font-weight:bold;color:#fff">ОПУБЛИКОВАТЬ</div>
<div class="a" style="left:845px;top:108.500px;width:16px;height:21px;background:#3949ab;border-radius:0 2px 2px 0"></div>
<svg style="left:850px;top:117px" width="7" height="4" viewBox="0 0 7 4"><path d="M0 0h7l-3.500 4z" fill="#fff"/></svg>


<div class="a" style="left:868.500px;top:134px;width:3.500px;height:453px;background:#bcbcbc"></div>
<div class="a" style="left:872px;top:134px;width:5px;height:463px;background:#ebebeb"></div>
<div class="a" style="left:873px;top:298px;width:4px;height:297px;background:#bdbdbd;border-radius:2px 2px 0 0"></div>

<div class="a" style="left:877px;top:102px;width:147px;height:495px;background:#fff"></div>
<div class="a t" style="left:884.500px;top:116px;font-size:7.650px;color:#757575">ВСТАВКА</div>
<div class="a t" style="left:935px;top:116px;font-size:7.650px;font-weight:bold;color:#3f4a9a">СТРАНИЦ</div>
<div class="a t" style="left:991.500px;top:116px;font-size:7.500px;color:#757575">ТЕМЫ</div>
<div class="a" style="left:928px;top:134.500px;width:51px;height:1.500px;background:#4a5588"></div>
<div class="a" style="left:877px;top:136px;width:147px;height:1px;background:#f0f0f0"></div>
<svg style="left:884px;top:143px" width="9" height="7" viewBox="0 0 9 7"><path d="M0 .6h9M1.500 3.300h6M3.500 6h2" stroke="#555" stroke-width="1.100"/></svg>
<div class="a t" style="left:900px;top:144px;font-size:7.500px;color:#c2c2c2">Фильтр страниц</div>
<div class="a" style="left:877px;top:158.500px;width:147px;height:1px;background:#e9e9e9"></div>
<svg style="left:882px;top:172px" width="6" height="3.500" viewBox="0 0 6 3.500"><path d="M0 0h6l-3 3.500z" fill="#444"/></svg>
<svg style="left:892px;top:169px" width="10" height="9" viewBox="0 0 10 9"><path d="M5 0L0 4.500h1.500V9h2.500V6h2v3h2.500V4.500H10z" fill="#3949ab"/></svg>
<div class="a t" style="left:907px;top:170.500px;font-size:7.300px;color:#4a55a0">Главная</div>
<svg style="left:907px;top:195.500px" width="8" height="10" viewBox="0 0 8 10"><path d="M0 1a1 1 0 0 1 1-1h4l3 3v6a1 1 0 0 1-1 1h-6a1 1 0 0 1-1-1z" fill="#616161"/><path d="M5 0v3h3z" fill="#bdbdbd"/></svg>
<svg style="left:907px;top:222px" width="8" height="10" viewBox="0 0 8 10"><path d="M0 1a1 1 0 0 1 1-1h4l3 3v6a1 1 0 0 1-1 1h-6a1 1 0 0 1-1-1z" fill="#616161"/><path d="M5 0v3h3z" fill="#bdbdbd"/></svg>
<svg style="left:907px;top:248.500px" width="8" height="10" viewBox="0 0 8 10"><path d="M0 1a1 1 0 0 1 1-1h4l3 3v6a1 1 0 0 1-1 1h-6a1 1 0 0 1-1-1z" fill="#616161"/><path d="M5 0v3h3z" fill="#bdbdbd"/></svg>
<svg style="left:907px;top:275px" width="8" height="10" viewBox="0 0 8 10"><path d="M0 1a1 1 0 0 1 1-1h4l3 3v6a1 1 0 0 1-1 1h-6a1 1 0 0 1-1-1z" fill="#616161"/><path d="M5 0v3h3z" fill="#bdbdbd"/></svg>
<div class="a t" style="left:921.500px;top:197.500px;font-size:7.400px;color:#757575">Удмуртские народные с...</div>
<div class="a t" style="left:921.500px;top:224px;font-size:7.500px;color:#757575">Наши выставки</div>
<div class="a t" style="left:921.500px;top:250.500px;font-size:7.300px;color:#757575">Путешествуем по Удмур...</div>
<div class="a t" style="left:921.500px;top:277px;font-size:7.500px;color:#757575">Давайте поиграем!</div>

<div class="a" style="left:935.500px;top:542px;width:32px;height:32px;border-radius:50%;background:#fff;box-shadow:0 1.500px 4px rgba(0,0,0,.3)"></div>
<svg style="left:947.500px;top:554px" width="8" height="8" viewBox="0 0 8 8"><path d="M4 0v8M0 4h8" stroke="#3949ab" stroke-width="1.200"/></svg>


<div class="a" style="left:0;top:49px;width:1024px;height:26px;background:#dee1e6"></div>
<div class="a" style="left:184px;top:50px;width:181px;height:25px;background:#fff;border-radius:7px 7px 0 0"></div>
<div class="a" style="left:178px;top:69px;width:6px;height:6px;background:radial-gradient(circle at 0 0,#dee1e6 5.5px,#fff 6px)"></div>
<div class="a" style="left:365px;top:69px;width:6px;height:6px;background:radial-gradient(circle at 100% 0,#dee1e6 5.5px,#fff 6px)"></div>

<svg style="left:13px;top:56px" width="13" height="12" viewBox="0 0 26 24"><path d="M9 1h8l8 14h-8z" fill="#fbbc04"/><path d="M9 1L1 15l4 8 8-14z" fill="#34a853"/><path d="M9 15h16l-4 8H5z" fill="#4285f4"/></svg>
<div class="a t" style="left:31px;top:58px;font-size:9.1px;color:#5f6368">Мой диск – Google Диск</div>
<svg style="left:169px;top:59px" width="7" height="7" viewBox="0 0 7 7"><path d="M.5.5l6 6M6.500.5l-6 6" stroke="#5f6368" stroke-width="1.1" fill="none"/></svg>

<svg style="left:193px;top:56px" width="12" height="12" viewBox="0 0 12 12"><rect width="12" height="12" rx="1" fill="#3949ab"/><rect x="2" y="2.600" width="8" height="2" fill="#fff"/><rect x="2" y="5.800" width="4.600" height="3.700" fill="#fff"/><rect x="7.600" y="5.800" width="2.400" height="3.700" fill="#fff"/></svg>
<div class="a t" style="left:211px;top:58px;font-size:8.9px;color:#3c4043">Без названия</div>
<svg style="left:349px;top:59px" width="7" height="7" viewBox="0 0 7 7"><path d="M.5.5l6 6M6.500.5l-6 6" stroke="#3c4043" stroke-width="1.100" fill="none"/></svg>
<svg style="left:376px;top:57px" width="10" height="10" viewBox="0 0 10 10"><path d="M5 .5v9M.5 5h9" stroke="#3c4043" stroke-width="1.300" fill="none"/></svg>

<svg style="left:935px;top:55px" width="80" height="12" viewBox="0 0 80 12"><path d="M0 5.500h8" stroke="#222" stroke-width="1.100" fill="none"/><rect x="35.500" y="3.500" width="6" height="6" rx="1" fill="none" stroke="#222" stroke-width="1.100"/><path d="M37.500 3.500v-1.500h6v6h-2" fill="none" stroke="#222" stroke-width="1.100"/><path d="M70 1.500l7.500 7.500M77.500 1.500l-7.500 7.500" stroke="#222" stroke-width="1.200" fill="none"/></svg>

<div class="a" style="left:0;top:75px;width:1024px;height:27px;background:#fff"></div>
<div class="a" style="left:0;top:101.500px;width:1024px;height:1px;background:#c9c9c9"></div>
<div class="a" style="left:80px;top:77px;width:888px;height:22px;border-radius:11px;background:#f1f3f4"></div>
<svg style="left:8px;top:82px" width="62" height="13" viewBox="0 0 62 13"><path d="M12.500 6.500h-10M6.500 2l-4.500 4.500 4.500 4.500" stroke="#4a4d51" stroke-width="1.300" fill="none"/><path d="M25.500 6.500h10M31.500 2l4.500 4.500-4.500 4.500" stroke="#c1c3c6" stroke-width="1.300" fill="none"/><path d="M58.500 4.200a4.600 4.600 0 1 0 1 4" stroke="#4a4d51" stroke-width="1.400" fill="none"/><path d="M59.800 1v4h-4z" fill="#4a4d51"/></svg>
<svg style="left:89px;top:83px" width="8" height="10" viewBox="0 0 8 10"><rect x=".5" y="4" width="7" height="5.500" rx=".8" fill="#5f6368"/><path d="M2 4.200v-1.500a2 2 0 0 1 4 0v1.500" stroke="#5f6368" stroke-width="1.200" fill="none"/></svg>
<div class="a t" style="left:103.500px;top:83.500px;font-size:10.380px;color:#70757a">https://<span style="color:#202124">sites.google.com</span>/s/1AEtZIU6ekt6Jsg0AxXxm6fTDa19piYbX/p/1DEg620a4WWtsJngEI7t0u67DcAwzWg4y/edit</div>

<svg style="left:926px;top:82px" width="12" height="12" viewBox="0 0 12 12"><circle cx="4.600" cy="4.600" r="3.600" stroke="#5f6368" stroke-width="1.100" fill="none"/><path d="M7.300 7.300l3.700 3.700M2.800 4.600h3.600" stroke="#5f6368" stroke-width="1.100" fill="none"/></svg>
<svg style="left:949px;top:82px" width="12" height="12" viewBox="0 0 24 24"><path d="M12 2.500l2.900 6.400 7 .7-5.300 4.700 1.600 6.900-6.200-3.700-6.200 3.700 1.600-6.900L2.100 9.600l7-.7z" stroke="#5f6368" stroke-width="2.200" fill="none" stroke-linejoin="round"/></svg>
<div class="a" style="left:977.500px;top:81px;width:15px;height:15px;border-radius:50%;background:#e8501e"></div>
<div class="a t" style="left:981.500px;top:84.500px;font-size:8px;font-weight:bold;color:#fff">Д</div>
<svg style="left:1008px;top:83px" width="3" height="11" viewBox="0 0 3 11"><circle cx="1.500" cy="1.500" r="1.300" fill="#5f6368"/><circle cx="1.500" cy="5.500" r="1.300" fill="#5f6368"/><circle cx="1.500" cy="9.500" r="1.300" fill="#5f6368"/></svg>

<div class="a" style="left:0;top:596.500px;width:1024px;height:30px;background:linear-gradient(90deg,#282c25 0,#292c25 40%,#2f2823 52%,#3b2622 62%,#3c2622 72%,#33281f 80%,#2a2d26 88%,#2a2d26 100%)"></div>

<svg style="left:6px;top:601.500px" width="20" height="20" viewBox="0 0 20 20"><path d="M0 3l8.500-1.400v7.900H0zM9.700 1.400L20 0v9.500H9.700zM0 10.600h8.500v7.900L0 17.200zM9.700 10.600H20V20L9.700 18.600z" fill="#fff"/></svg>

<svg style="left:45px;top:605px" width="14" height="14" viewBox="0 0 14 14"><circle cx="8.500" cy="5" r="3.800" stroke="#fff" stroke-width="1.200" fill="none"/><path d="M5.800 7.800l-5 5" stroke="#fff" stroke-width="1.300"/></svg>

<svg style="left:81px;top:606px" width="14" height="12" viewBox="0 0 14 12"><rect x="2.500" y="2.500" width="7" height="7" stroke="#fff" stroke-width="1.100" fill="none"/><path d="M1 .6h10M1 11.400h10M12.600 1v2M12.600 5v6" stroke="#fff" stroke-width="1.100"/></svg>

<svg style="left:121px;top:604px" width="17" height="15" viewBox="0 0 17 15"><path d="M0 1.500h6l1.500 1.500h9.500v11H0z" fill="#f3d36b"/><path d="M0 5h17v9H0z" fill="#f8e08a"/><rect x="4" y="8" width="9" height="6" fill="#3fa0dd"/><rect x="6" y="10.500" width="5" height="3.500" fill="#f8e08a"/></svg>
<div class="a" style="left:114px;top:625px;width:31px;height:1.500px;background:#e58a7e"></div>

<svg style="left:158px;top:603px" width="16" height="17" viewBox="0 0 16 17"><ellipse cx="8" cy="8.500" rx="7.800" ry="8.300" fill="#c51a1a"/><ellipse cx="8" cy="8.500" rx="3.200" ry="5.800" fill="#7a0f0f"/><ellipse cx="8.300" cy="8.500" rx="2.200" ry="5" fill="#f3dada"/></svg>

<svg style="left:194px;top:604px" width="17" height="15" viewBox="0 0 17 15"><rect x="5" y="1" width="12" height="13" fill="#e9eef7" stroke="#7d98c6" stroke-width=".8"/><path d="M8 4h7M8 6.500h7M8 9h7M8 11.500h7" stroke="#7d98c6" stroke-width=".8"/><path d="M0 2l10-2v15l-10-2z" fill="#5d88cc"/><text x="2" y="10.500" font-size="7.500" font-weight="bold" fill="#fff" font-family="Liberation Sans,sans-serif">W</text></svg>

<svg style="left:231px;top:604px" width="17" height="15" viewBox="0 0 17 15"><rect x="5" y="1" width="12" height="13" fill="#e6f1e2" stroke="#7fb077" stroke-width=".8"/><path d="M8 4h8M8 7.500h8M8 11h8M12 1v13" stroke="#7fb077" stroke-width=".8"/><path d="M0 2l10-2v15l-10-2z" fill="#a3cf96"/><text x="2.300" y="10.500" font-size="7.500" font-weight="bold" fill="#1f5f28" font-family="Liberation Sans,sans-serif">X</text></svg>

<svg style="left:270px;top:603px" width="13" height="17" viewBox="0 0 13 17"><rect width="13" height="17" rx="1" fill="#f4f4f4"/><rect x="1.800" y="1.800" width="9.400" height="3.200" fill="#444"/><g fill="#444"><rect x="1.800" y="6.500" width="2.200" height="2"/><rect x="5.400" y="6.500" width="2.200" height="2"/><rect x="9" y="6.500" width="2.200" height="2"/><rect x="1.800" y="9.800" width="2.200" height="2"/><rect x="5.400" y="9.800" width="2.200" height="2"/><rect x="9" y="9.800" width="2.200" height="2"/><rect x="1.800" y="13.100" width="2.200" height="2"/><rect x="5.400" y="13.100" width="2.200" height="2"/><rect x="9" y="13.100" width="2.200" height="2"/></g></svg>

<div class="a" style="left:296px;top:596.500px;width:36px;height:30px;background:#585b55"></div>
<div class="a" style="left:296px;top:625px;width:36px;height:1.500px;background:#e58a7e"></div>
<svg style="left:305.500px;top:603px" width="17" height="17" viewBox="0 0 34 34"><circle cx="17" cy="17" r="16.500" fill="#db4437"/><path d="M17 17L2.700 8.750A16.500 16.500 0 0 0 17 33.500z" fill="#0f9d58"/><path d="M17 17l0 16.500A16.500 16.500 0 0 0 31.300 8.750L17 8.750z" fill="#ffcd40"/><path d="M2.700 8.750A16.500 16.500 0 0 1 31.300 8.750z" fill="#db4437"/><circle cx="17" cy="17" r="7.800" fill="#f1f1f1"/><circle cx="17" cy="17" r="6" fill="#4285f4"/></svg>

<svg style="left:340px;top:602px" width="19" height="18" viewBox="0 0 19 18"><ellipse cx="8.500" cy="11" rx="8.300" ry="6.500" fill="#e9e4d6"/><ellipse cx="8.500" cy="11" rx="8.300" ry="6.500" fill="none" stroke="#8f9aa8" stroke-width=".8"/><circle cx="4.500" cy="9.500" r="1.500" fill="#3b82d8"/><circle cx="8" cy="7.500" r="1.500" fill="#e0b020"/><circle cx="4.800" cy="13.300" r="1.500" fill="#3aa655"/><circle cx="9" cy="14.800" r="1.400" fill="#d84a3a"/><path d="M17.800 1l-6.300 9-1.700 3.200 2.800-2.300z" fill="#c9a45a"/><path d="M17.800 1l-2.200 1.200 1.300 1z" fill="#e8b030"/></svg>
<div class="a" style="left:332px;top:625px;width:37px;height:1.500px;background:#e58a7e"></div>

<svg style="left:716px;top:606px" width="13" height="12" viewBox="0 0 13 12"><circle cx="8.800" cy="2.800" r="2" stroke="#fff" stroke-width="1" fill="none"/><circle cx="4" cy="6" r="1.800" stroke="#fff" stroke-width="1" fill="none"/><path d="M.8 12c0-2.500 1.500-3.800 3.200-3.800s3.200 1.300 3.200 3.800M7 6.500c2.500-1.500 5.200 0 5.200 3" stroke="#fff" stroke-width="1" fill="none"/></svg>

<svg style="left:841px;top:609px" width="9" height="6" viewBox="0 0 9 6"><path d="M.5 5.300l4-4.300 4 4.300" stroke="#fff" stroke-width="1.100" fill="none"/></svg>

<div class="a" style="left:859px;top:605.500px;width:11.500px;height:10.500px;background:#aeb4bc"></div>
<div class="a t" style="left:860px;top:607.500px;font-size:7px;color:#20242c;letter-spacing:-.4px">Ru</div>

<svg style="left:877px;top:606px" width="12" height="11" viewBox="0 0 12 11"><path d="M1 10.500a9.500 9.500 0 0 1 10-9.500M4 10.500a6.500 6.500 0 0 1 7-6.500M7 10.500a3.500 3.500 0 0 1 4-3.500" stroke="#d0d0d0" stroke-width="1" fill="none"/><circle cx="10.300" cy="10" r="1" fill="#d0d0d0"/></svg>

<svg style="left:893px;top:606px" width="13" height="11" viewBox="0 0 13 11"><path d="M.6 3.800h2.400l3-2.800v9l-3-2.800H.6z" stroke="#fff" stroke-width="1" fill="none" stroke-linejoin="round"/><path d="M8 3.500a3 3 0 0 1 0 4M10 2a5.500 5.500 0 0 1 0 7" stroke="#fff" stroke-width=".9" fill="none"/></svg>
<div class="a t" style="left:914.500px;top:607.500px;font-size:8.200px;color:#fff">РУС</div>
<div class="a t" style="left:951px;top:600.500px;font-size:8.300px;color:#fff">11:02</div>
<div class="a t" style="left:941px;top:614.500px;font-size:8.300px;color:#fff">02.11.2018</div>

<svg style="left:995px;top:605px" width="15" height="15" viewBox="0 0 15 15"><path d="M.5.500h10v8h-6.500l-1.700 2v-2h-1.800z" fill="#fff"/><path d="M2.300 2.800h6.400M2.300 4.600h6.400M2.300 6.400h4" stroke="#2a2d26" stroke-width=".8"/><circle cx="10.300" cy="10.200" r="4" fill="#2a2d26" stroke="#fff" stroke-width=".9"/><text x="8.700" y="12.700" font-size="6.500" fill="#fff" font-family="Liberation Sans,sans-serif">1</text></svg>

</div></div>
<div id="caption">
<div style="top:640px;letter-spacing:.06px">Для того, чтобы раздел музея открывался при нажатии на название этого раздела,</div>
<div style="top:671px;letter-spacing:.26px">нужно нажать мышкой на название и в открывшемся диалоговом окне выбрать</div>
<div style="top:701px;letter-spacing:-.2px">функцию «Вставить ссылку».</div>
</div>
</body>
</html>
